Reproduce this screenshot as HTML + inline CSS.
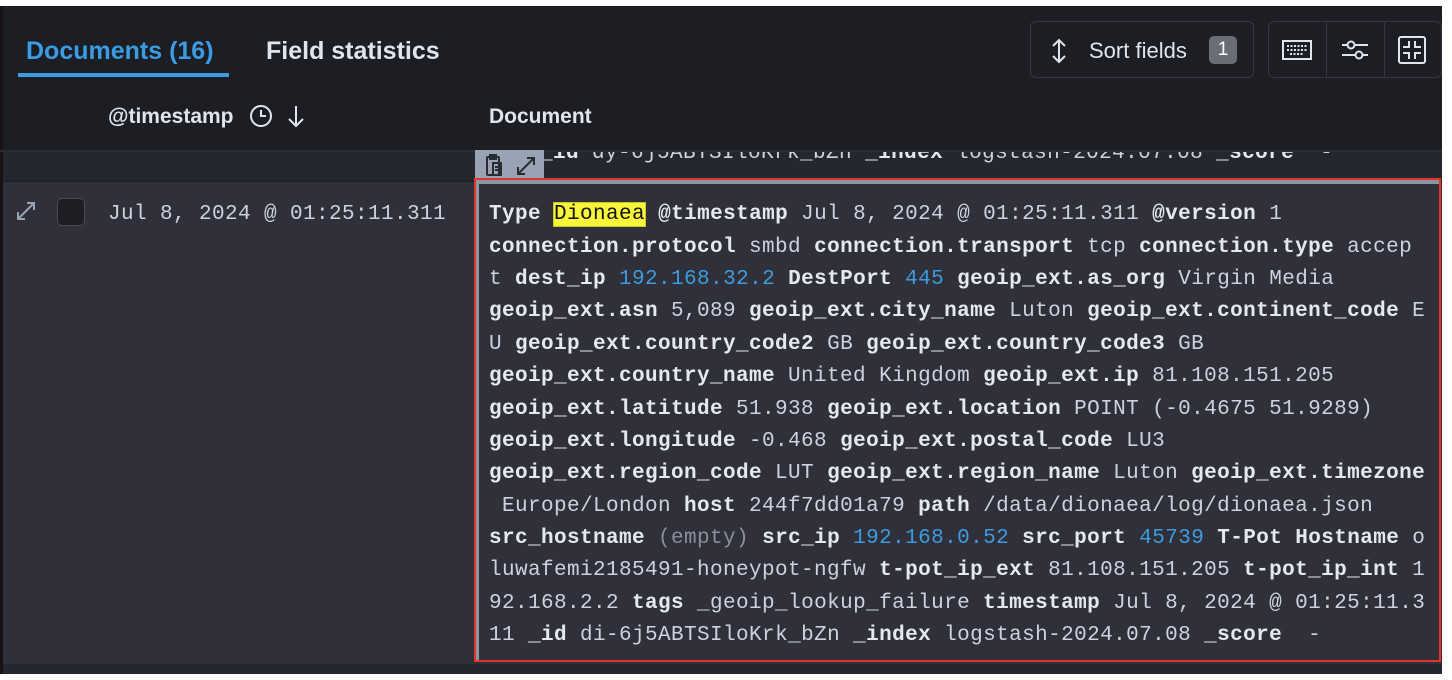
<!DOCTYPE html>
<html><head><meta charset="utf-8"><style>
body{margin:0;width:1452px;height:680px;background:#fff;position:relative;overflow:hidden;font-family:"Liberation Sans",sans-serif}
.main{position:absolute;left:0;top:6px;width:1442px;height:668px;background:#1d1e24}
.ls{position:absolute;left:0;top:6px;width:3px;height:668px;background:#1a1016}
.tab{position:absolute;top:37px;font-size:25px;font-weight:bold;color:#dfe5ef}
.mono{font-family:"Liberation Mono",monospace;font-size:21px;letter-spacing:0.4px}
.line{position:absolute;left:489px;white-space:pre;color:#ccd3de}
b{color:#e4e9f1}
.bl{color:#3d9be0}
.hl{background:#f8f53a;color:#111;outline:1px solid #c9c62a}
.btn{position:absolute;border:1px solid #343741;border-radius:6px}
</style></head><body>
<div class="main"></div>
<div class="ls"></div>
<div class="tab" style="left:26px;color:#3a9ce3">Documents (16)</div>
<div style="position:absolute;left:18px;top:73px;width:211px;height:4px;background:#3a9ce3"></div>
<div class="tab" style="left:266px">Field statistics</div>

<div class="btn" style="left:1030px;top:21px;width:222px;height:55px"></div>
<svg style="position:absolute;left:1048px;top:38px" width="22" height="26" viewBox="0 0 22 26" fill="none" stroke="#dfe5ef" stroke-width="2"><path d="M11 2v22M5 8l6-6 6 6M5 18l6 6 6-6"/></svg>
<div style="position:absolute;left:1089px;top:38px;font-size:22px;color:#dfe5ef">Sort fields</div>
<div style="position:absolute;left:1209px;top:36px;width:28px;height:28px;border-radius:5px;background:#6a6d75;color:#fff;font-size:19px;text-align:center;line-height:28px">1</div>

<div class="btn" style="left:1268px;top:21px;width:172px;height:55px"></div>
<div style="position:absolute;left:1326px;top:22px;width:1px;height:55px;background:#343741"></div>
<div style="position:absolute;left:1384px;top:22px;width:1px;height:55px;background:#343741"></div>
<svg style="position:absolute;left:1282px;top:38px" width="30" height="24" viewBox="0 0 30 24" fill="none" stroke="#dfe5ef" stroke-width="2"><rect x="1" y="3" width="28" height="18"/><path d="M5 8h20M5 12h20M8 16h14" stroke-dasharray="2 1.5"/></svg>
<svg style="position:absolute;left:1341px;top:38px" width="28" height="24" viewBox="0 0 28 24" fill="none" stroke="#dfe5ef" stroke-width="2"><path d="M1 7h26M1 17h26"/><circle cx="10" cy="7" r="3.5" fill="#1d1e24"/><circle cx="18" cy="17" r="3.5" fill="#1d1e24"/></svg>
<svg style="position:absolute;left:1398px;top:36px" width="28" height="28" viewBox="0 0 28 28" fill="none" stroke="#dfe5ef" stroke-width="2"><rect x="1" y="1" width="26" height="26" rx="2"/><path d="M11 5v6H5M17 5v6h6M11 23v-6H5M17 23v-6h6"/></svg>

<div style="position:absolute;left:108px;top:105px;font-size:21px;font-weight:bold;color:#dfe5ef">@timestamp</div>
<svg style="position:absolute;left:249px;top:104px" width="24" height="24" viewBox="0 0 24 24" fill="none" stroke="#dfe5ef" stroke-width="2"><circle cx="12" cy="12" r="10"/><path d="M12 6v6h5"/></svg>
<svg style="position:absolute;left:286px;top:104px" width="20" height="24" viewBox="0 0 20 24" fill="none" stroke="#dfe5ef" stroke-width="2"><path d="M10 2v20M3 15l7 7 7-7"/></svg>
<div style="position:absolute;left:489px;top:105px;font-size:21px;font-weight:bold;color:#dfe5ef">Document</div>

<div style="position:absolute;left:0;top:150px;width:1442px;height:2px;background:#2a2c33"></div>
<div style="position:absolute;left:3px;top:152px;width:1439px;height:29px;background:#25272e;overflow:hidden">
 <div class="mono" style="position:absolute;left:537px;top:-10px;color:#ccd3de;white-space:pre"><b>_id</b> dy-6j5ABTSIloKrk_bZn <b>_index</b> logstash-2024.07.08 <b>_score</b>  -</div>
</div>
<div style="position:absolute;left:475px;top:150px;width:69px;height:30px;background:#9aa3b3"></div>
<svg style="position:absolute;left:482px;top:153px" width="24" height="24" viewBox="0 0 24 24" fill="none" stroke="#2a2c33" stroke-width="2"><rect x="5" y="4" width="12" height="18" rx="1"/><rect x="8" y="2" width="6" height="4"/><path d="M11 10h8v12h-8zM13 14h4M13 17h4"/></svg>
<svg style="position:absolute;left:514px;top:154px" width="24" height="24" viewBox="0 0 24 24" fill="none" stroke="#2a2c33" stroke-width="2"><path d="M4 20L20 4M13 4h7v7M4 13v7h7"/></svg>

<div style="position:absolute;left:3px;top:182px;width:1439px;height:482px;background:#2f3039"></div>
<div style="position:absolute;left:3px;top:664px;width:1439px;height:10px;background:#25272e"></div>
<svg style="position:absolute;left:14px;top:199px" width="24" height="24" viewBox="0 0 24 24" fill="none" stroke="#9aa3b3" stroke-width="2"><path d="M4 20L20 4M13 4h7v7M4 13v7h7"/></svg>
<div style="position:absolute;left:57px;top:198px;width:26px;height:26px;border-radius:5px;background:#1d1e24;border:1px solid #4a4d56"></div>
<div class="mono" style="position:absolute;left:108px;top:203px;color:#ccd3de">Jul 8, 2024 @ 01:25:11.311</div>

<div style="position:absolute;left:474px;top:178px;width:967px;height:484px;border:2px solid #e0352b;box-sizing:border-box"></div>
<div style="position:absolute;left:476px;top:180px;width:963px;height:4px;background:#8c95a4"></div>
<div style="position:absolute;left:476px;top:180px;width:3px;height:480px;background:#8c95a4"></div>

<div class="mono">
<div class="line" style="top:203px"><b>Type</b> <span class="hl">Dionaea</span> <b>@timestamp</b> Jul 8, 2024 @ 01:25:11.311 <b>@version</b> 1</div>
<div class="line" style="top:236px"><b>connection.protocol</b> smbd <b>connection.transport</b> tcp <b>connection.type</b> accep</div>
<div class="line" style="top:268px">t <b>dest_ip</b> <span class="bl">192.168.32.2</span> <b>DestPort</b> <span class="bl">445</span> <b>geoip_ext.as_org</b> Virgin Media</div>
<div class="line" style="top:300px"><b>geoip_ext.asn</b> 5,089 <b>geoip_ext.city_name</b> Luton <b>geoip_ext.continent_code</b> E</div>
<div class="line" style="top:333px">U <b>geoip_ext.country_code2</b> GB <b>geoip_ext.country_code3</b> GB</div>
<div class="line" style="top:365px"><b>geoip_ext.country_name</b> United Kingdom <b>geoip_ext.ip</b> 81.108.151.205</div>
<div class="line" style="top:398px"><b>geoip_ext.latitude</b> 51.938 <b>geoip_ext.location</b> POINT (-0.4675 51.9289)</div>
<div class="line" style="top:430px"><b>geoip_ext.longitude</b> -0.468 <b>geoip_ext.postal_code</b> LU3</div>
<div class="line" style="top:462px"><b>geoip_ext.region_code</b> LUT <b>geoip_ext.region_name</b> Luton <b>geoip_ext.timezone</b></div>
<div class="line" style="top:495px"> Europe/London <b>host</b> 244f7dd01a79 <b>path</b> /data/dionaea/log/dionaea.json</div>
<div class="line" style="top:527px"><b>src_hostname</b> <span style="color:#8a909b">(empty)</span> <b>src_ip</b> <span class="bl">192.168.0.52</span> <b>src_port</b> <span class="bl">45739</span> <b>T-Pot Hostname</b> o</div>
<div class="line" style="top:559px">luwafemi2185491-honeypot-ngfw <b>t-pot_ip_ext</b> 81.108.151.205 <b>t-pot_ip_int</b> 1</div>
<div class="line" style="top:592px">92.168.2.2 <b>tags</b> _geoip_lookup_failure <b>timestamp</b> Jul 8, 2024 @ 01:25:11.3</div>
<div class="line" style="top:624px">11 <b>_id</b> di-6j5ABTSIloKrk_bZn <b>_index</b> logstash-2024.07.08 <b>_score</b>  -</div>
</div>
</body></html>
